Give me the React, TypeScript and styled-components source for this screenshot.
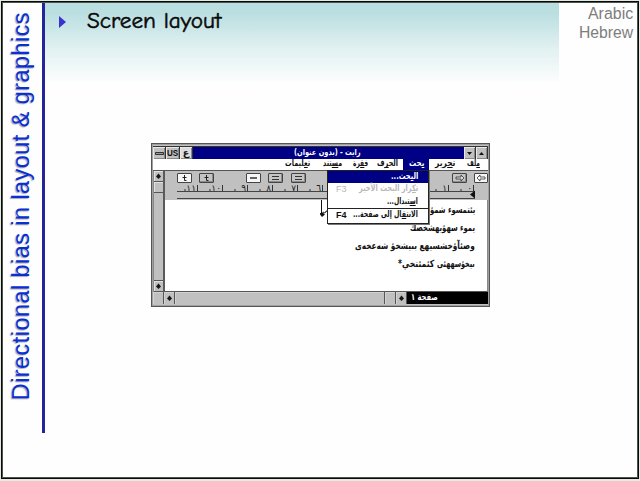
import React, { useLayoutEffect, useRef, useState } from "react";
import styled, { createGlobalStyle } from "styled-components";

const Global = createGlobalStyle`
  * { box-sizing: border-box; }
  body { margin: 0; background: #e4ebe4; font-family: "Liberation Sans", Arial, sans-serif; }
  u { text-decoration-thickness: 1px; text-underline-offset: 1px; text-decoration-skip-ink: none; }
`;

const Slide = styled.main`
  width: 640px;
  height: 481px;
  padding: 1px 1px 1px;
  overflow: hidden;
`;
const Frame = styled.div`
  display: flex;
  height: 478px;
  border: 2px solid #080a08;
  border-width: 1px 1px 2px 1px;
  outline: 1px solid #4d534d;
  outline-offset: -2px;
  background: #fefefe;
`;
const Sidebar = styled.aside`
  width: 43px;
  height: 431px;
  border-right: 3px solid #25259b;
  display: flex;
  align-items: flex-end;
`;
const SideTitle = styled.h1`
  margin: 0 0 33px 5px;
  font-weight: 400;
  font-size: 23.5px;
  line-height: 28px;
  letter-spacing: 0.43px;
  color: #0a2fd0;
  white-space: nowrap;
  writing-mode: vertical-rl;
  transform: rotate(180deg);
  text-shadow: -1px -1px 1px #a8a8b0;
`;
const Content = styled.section`
  width: 514px;
  height: 100%;
  background: linear-gradient(#b9dee0 0, #bbdfe1 12px, #e0f0f0 45px, #fefefe 82px);
`;
const Heading = styled.div`
  display: flex;
  align-items: center;
  height: 40px;
  padding-left: 14px;
  gap: 21px;
`;
const HeadingText = styled.h2`
  margin: 0;
  padding-bottom: 2px;
  font: 500 22px/28px "Comic Sans MS", "Comic Neue", "Noto Sans", sans-serif;
  -webkit-text-stroke: 0.5px #080808;
  color: #080808;
`;
const Tags = styled.div`
  flex: 1;
  padding: 2px 5px 0 0;
  text-align: right;
  font-size: 16.3px;
  line-height: 19px;
  color: #7d7d7d;
  white-space: nowrap;
  display: flex;
  flex-direction: column;
  align-items: flex-end;
`;

const FitOuter = styled.span<{ $w: number }>`
  display: inline-flex;
  flex: none;
  width: ${(p) => p.$w}px;
  white-space: nowrap;
  direction: ltr;
`;
const FitInner = styled.span`
  flex: none;
  transform-origin: left center;
  unicode-bidi: isolate;
`;
function Fit({ w, children, rtl }: { w: number; children: React.ReactNode; rtl?: boolean }) {
  const ref = useRef<HTMLSpanElement>(null);
  const [scale, setScale] = useState(1);
  useLayoutEffect(() => {
    if (ref.current) setScale(w / ref.current.offsetWidth);
  }, [w]);
  return (
    <FitOuter $w={w}>
      <FitInner ref={ref} dir={rtl ? "rtl" : "ltr"} style={{ transform: `scaleX(${scale})` }}>
        {children}
      </FitInner>
    </FitOuter>
  );
}

const AppWindow = styled.div`
  width: 339px;
  height: 164px;
  margin: 101px 0 0 106px;
  border: 1px solid #555;
  background: #c0c0c0;
  box-shadow: inset 0 0 0 1px #a0a0a0;
  padding: 2px 1px 1px;
  font: bold 9px/12px "DejaVu Sans", "Liberation Sans", sans-serif;
  color: #111;
`;
const TitleBar = styled.div`
  display: flex;
  height: 13px;
  background: #000084;
  border-top: 1px solid #333;
`;
const TitleButton = styled.div<{ $w: number; $light?: boolean }>`
  width: ${(p) => p.$w}px;
  display: flex;
  align-items: center;
  justify-content: center;
  background: ${(p) => (p.$light ? "#dcdcdc" : "#c0c0c0")};
  border-right: 1px solid #333;
  box-shadow: inset 1px 1px #e8e8e8, inset -1px -1px #888;
  font-family: "Liberation Sans", "DejaVu Sans", sans-serif;
  font-size: 9.5px;
`;
const Caption = styled.div`
  flex: 1;
  padding-left: 101px;
  line-height: 11px;
  color: #fff;
  font-size: 8.5px;
`;
const MenuBar = styled.div`
  display: flex;
  direction: rtl;
  height: 12px;
  background: #fff;
  padding-right: 1px;
  font-size: 9px;
  line-height: 9px;
  border-bottom: 1px solid #555;
`;
const MenuItem = styled.div<{ $w: number; $active?: boolean }>`
  width: ${(p) => p.$w}px;
  height: 11px;
  display: flex;
  justify-content: center;
  color: ${(p) => (p.$active ? "#fff" : "#111")};
  background: ${(p) => (p.$active ? "#000084" : "transparent")};
`;
const Body = styled.div`
  position: relative;
  display: flex;
  height: 121px;
`;
const VScroll = styled.div`
  width: 12px;
  display: flex;
  flex-direction: column;
  border-right: 2px solid #5a5a5a;
  border-left: 1px solid #888;
`;
const ScrollCell = styled.div<{ $grow?: boolean }>`
  flex: ${(p) => (p.$grow ? "1" : "0 0 11px")};
  border-bottom: 1px solid #555;
  display: flex;
  align-items: center;
  justify-content: center;
  box-shadow: inset 1px 1px ${(p) => (p.$grow ? "#c0c0c0" : "#e2e2e2")};
`;
const Main = styled.div`
  flex: 1;
  display: flex;
  flex-direction: column;
`;
const Tools = styled.div`
  height: 12px;
  padding: 2px 0 0 12px;
  display: flex;
  flex: none;
`;
const Tool = styled.div<{ $ml?: number; $on?: boolean; $w?: number }>`
  flex: none;
  width: ${(p) => p.$w ?? 15}px;
  height: 10px;
  margin-left: ${(p) => p.$ml ?? 0}px;
  border: 1px solid #444;
  border-radius: 1px;
  background: ${(p) => (p.$on ? "#f6f6f6" : "#c4c4c4")};
  box-shadow: ${(p) => (p.$on ? "none" : "inset -1px -1px #8b8b8b")};
  display: flex;
  align-items: center;
  justify-content: center;
`;
const Paper = styled.div`
  flex: 1;
  background: #fff;
  display: flex;
  flex-direction: column;
  align-items: flex-end;
  padding: 1px 12px 0 0;
  border-right: 1px solid #888;
  border-bottom: 1px solid #555;
  font-size: 10px;
  line-height: 18px;
`;
const Line = styled.div`
  height: 18px;
  display: flex;
  gap: 3px;
  direction: rtl;
`;
const Caret = styled.div`
  position: absolute;
  left: 167px;
  top: 29px;
  width: 10px;
  height: 17px;
`;
const Popup = styled.div`
  position: absolute;
  left: 174px;
  top: -1px;
  width: 102px;
  height: 54px;
  border: 1px solid #222;
  background: #fff;
  box-shadow: 1px 1px #777;
`;
const PopupRow = styled.div<{ $tone?: "active" | "muted"; $rule?: boolean }>`
  display: flex;
  justify-content: space-between;
  height: ${(p) => (p.$rule ? 14 : p.$tone === "muted" ? 13 : 12)}px;
  padding: 0 10px 0 8px;
  line-height: 11px;
  font-size: 9px;
  color: ${(p) => (p.$tone === "active" ? "#fff" : p.$tone === "muted" ? "#b8b8b8" : "#111")};
  background: ${(p) => (p.$tone === "active" ? "#000084" : "transparent")};
  border-top: ${(p) => (p.$rule ? "1px solid #222" : "0")};
`;
const Key = styled.span<{ $light?: boolean }>`
  font: ${(p) => (p.$light ? 400 : 700)} 9px/13px "Liberation Sans", sans-serif;
`;
const StatusBar = styled.div`
  display: flex;
  height: 12px;
`;
const StatusCell = styled.div<{ $w?: number }>`
  ${(p) => (p.$w ? `width: ${p.$w}px;` : "flex: 1;")}
  border-right: 1px solid #555;
  box-shadow: inset 1px 1px #d2d2d2;
  display: flex;
  align-items: center;
  justify-content: center;
`;
const PageNo = styled.div`
  width: 81px;
  background: #000;
  color: #fff;
  padding-left: 4px;
  line-height: 10px;
  font-size: 9px;
`;

const Pip = () => (
  <svg width="7" height="7" viewBox="0 0 7 7"><path d="M3.5 .5 6 3.5 3.5 6 1 3.5Z" fill="#181818" /></svg>
);
const TabMark = () => (
  <svg width="7" height="8" viewBox="0 0 7 8"><path d="M3.500 1v5.500h2M1.500 3.500h4" fill="none" stroke="#222" /></svg>
);
const Bars = ({ n }: { n: number }) => (
  <svg width="9" height="6" viewBox="0 0 9 6">
    <path d={n === 1 ? "M1 3h7" : "M1 1.500h7M1 4.500h7"} stroke="#333" strokeWidth={n === 1 ? 1.5 : 1} fill="none" />
  </svg>
);
const Arrow = ({ left }: { left?: boolean }) => (
  <svg width="10" height="8" viewBox="0 0 10 8">
    <path
      d={left ? "M1 4l3-3v2h5v2H4v2Z" : "M9 4 6 1v2H1v2h5v2Z"}
      fill={left ? "#fff" : "#ddd"}
      stroke="#333"
      strokeWidth=".8"
    />
  </svg>
);

// Labels 2 to 5 are covered by the open menu.
const digits = ["٠", "١", "", "", "", "", "٦", "٧", "٨", "٩", "١٠", "١١"];
const Ruler = () => (
  <svg width="322" height="17" viewBox="165 183 322 17">
    <path d="M177 191.5H475M177 198.500H475" stroke="#444" />
    {digits.map((d, i) => {
      const x = Math.round(473 - i * 25.1) + 0.5;
      return (
        <g key={i}>
          <path d={`M${x} 185v6M${x - 12.5} 189v2`} stroke="#333" />
          {d && <text x={x - 1.5} y="191" textAnchor="end" fontSize="9" fontWeight="400" fill="#222">{d}</text>}
        </g>
      );
    })}
    <path d="M470 194.500l5-4v8Z" fill="#111" />
  </svg>
);

export default function App() {
  return (
    <Slide>
      <Global />
      <Frame>
        <Sidebar><SideTitle>Directional bias in layout &amp; graphics</SideTitle></Sidebar>
        <Content>
          <Heading>
            <svg width="7" height="12" viewBox="0 0 7 12"><path d="M0 0 7 6 0 12Z" fill="#3a34cf" /></svg>
            <HeadingText><Fit w={134}>Screen layout</Fit></HeadingText>
          </Heading>
          <AppWindow>
            <TitleBar>
              <TitleButton $w={13}><svg width="9" height="3"><path d="M.5 .5h8v2h-8Z" fill="#999" stroke="#333" /></svg></TitleButton>
              <TitleButton $w={14}><Fit w={11}>US</Fit></TitleButton>
              <TitleButton $w={13} $light>ع</TitleButton>
              <Caption><Fit w={67} rtl>رايت - (بدون عنوان)</Fit></Caption>
              <TitleButton $w={12}><svg width="5" height="3"><path d="M0 0h5L2.5 3Z" fill="#111" /></svg></TitleButton>
              <TitleButton $w={12}><svg width="5" height="3"><path d="M0 3h5L2.5 0Z" fill="#111" /></svg></TitleButton>
            </TitleBar>
            <MenuBar>
              <MenuItem $w={27}><Fit w={13} rtl><u>م</u>لف</Fit></MenuItem>
              <MenuItem $w={31}><Fit w={20} rtl>ت<u>ح</u>رير</Fit></MenuItem>
              <MenuItem $w={26} $active><Fit w={15} rtl><u>ب</u>حث</Fit></MenuItem>
              <MenuItem $w={31}><Fit w={21} rtl>الح<u>ر</u>ف</Fit></MenuItem>
              <MenuItem $w={24}><Fit w={15} rtl>ف<u>ق</u>رة</Fit></MenuItem>
              <MenuItem $w={32}><Fit w={19} rtl>م<u>س</u>تند</Fit></MenuItem>
              <MenuItem $w={37}><Fit w={25} rtl>ت<u>ع</u>ليمات</Fit></MenuItem>
            </MenuBar>
            <Body>
              <VScroll>
                <ScrollCell><Pip /></ScrollCell>
                <ScrollCell />
                <ScrollCell $grow />
                <ScrollCell><Pip /></ScrollCell>
              </VScroll>
              <Main>
                <Tools>
                  <Tool $on><TabMark /></Tool>
                  <Tool $ml={7}><TabMark /></Tool>
                  <Tool $ml={32} $on><Bars n={1} /></Tool>
                  <Tool $ml={7}><Bars n={2} /></Tool>
                  <Tool $ml={8}><Bars n={2} /></Tool>
                  <Tool $ml={146}><Arrow /></Tool>
                  <Tool $ml={7} $on $w={14}><Arrow left /></Tool>
                </Tools>
                <Ruler />
                <Paper>
                  <Line><Fit w={45} rtl>يئتمسوء شمؤ</Fit></Line>
                  <Line><Fit w={65} rtl>يموء سهؤيهشخصك</Fit></Line>
                  <Line><Fit w={120} rtl>وصئآؤخشسيهع بىيشخؤ شەعخەى</Fit></Line>
                  <Line><Fit w={38} rtl>ىيخؤسههئى</Fit><Fit w={36} rtl>كئمئتخي*</Fit></Line>
                </Paper>
              </Main>
              <Caret>
                <svg width="10" height="17"><path d="M1.5 0v13M0 13.5h3M3 12q3 2 3-1q1 1 3-1" stroke="#111" fill="none" /><path d="M2 12l3 2.500-3 2.500-2-2.500Z" fill="#111" /></svg>
              </Caret>
              <Popup>
                <PopupRow $tone="active"><span /><Fit w={27} rtl>ال<u>ب</u>حث...</Fit></PopupRow>
                <PopupRow $tone="muted"><Key $light>F3</Key><Fit w={59} rtl>ت<u>ك</u>رار البحث الأخير</Fit></PopupRow>
                <PopupRow><span /><Fit w={31} rtl>ا<u>س</u>تبدال...</Fit></PopupRow>
                <PopupRow $rule><Key>F4</Key><Fit w={65} rtl>الانت<u>ق</u>ال إلى صفحة...</Fit></PopupRow>
              </Popup>
            </Body>
            <StatusBar>
              <StatusCell $w={11} />
              <StatusCell $w={11}><Pip /></StatusCell>
              <StatusCell />
              <StatusCell $w={11} />
              <StatusCell $w={11}><Pip /></StatusCell>
              <PageNo><Fit w={27} rtl>صفحة ١</Fit></PageNo>
            </StatusBar>
          </AppWindow>
        </Content>
        <Tags><Fit w={45}>Arabic</Fit><Fit w={54}>Hebrew</Fit></Tags>
      </Frame>
    </Slide>
  );
}
